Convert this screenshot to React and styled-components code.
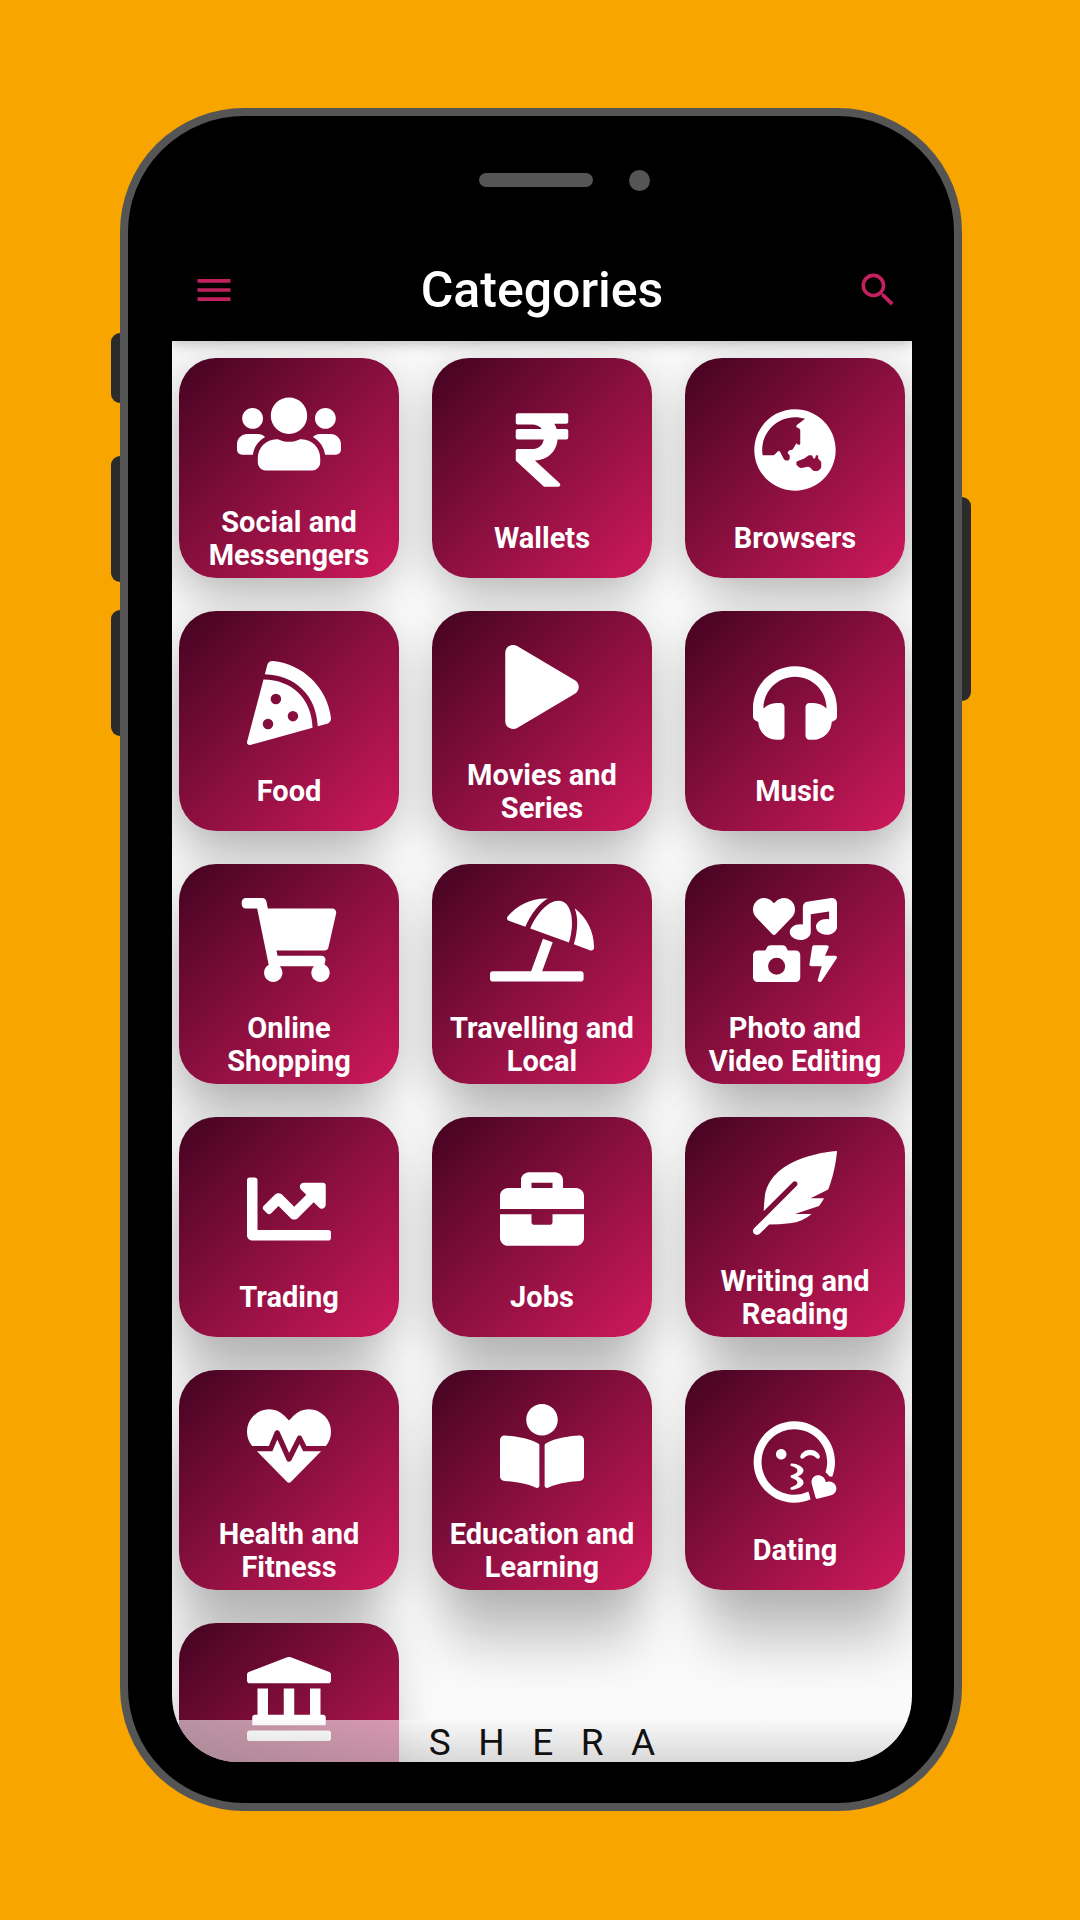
import React from "react";
import styled, { createGlobalStyle } from "styled-components";
import {
  FaUsers,
  FaRupeeSign,
  FaGlobeAsia,
  FaPizzaSlice,
  FaPlay,
  FaHeadphones,
  FaShoppingCart,
  FaUmbrellaBeach,
  FaIcons,
  FaChartLine,
  FaBriefcase,
  FaFeatherAlt,
  FaHeartbeat,
  FaBookReader,
  FaRegKissWinkHeart,
  FaLandmark,
} from "react-icons/fa";
import { MdMenu, MdSearch } from "react-icons/md";

const GlobalStyle = createGlobalStyle`
  *, *::before, *::after { box-sizing: border-box; }
  body {
    margin: 0;
    background: #f8a500;
    font-family: Roboto, "Liberation Sans", sans-serif;
  }
`;

const Stage = styled.div`
  display: flex;
  height: 100vh;
  padding: 108px 118px 109px 120px;
`;

const Phone = styled.div`
  position: relative;
  flex: 1;
  min-width: 0;
  display: flex;
  flex-direction: column;
  padding: 0 42px 41px 44px;
  background: #000;
  border: 8px solid #555;
  border-radius: 124px;
`;

const SideButton = styled.span`
  position: absolute;
  top: ${(p) => p.$top}px;
  ${(p) => p.$side}: -17px;
  width: 9px;
  height: ${(p) => p.$length}px;
  background: #2b2b2b;
  border-radius: ${(p) => (p.$side === "left" ? "9px 0 0 9px" : "0 9px 9px 0")};
`;

const Sensors = styled.div`
  display: flex;
  align-items: center;
  justify-content: center;
  gap: 36px;
  height: 124px;
  padding: 4px 0 0 44px;
`;

const Speaker = styled.span`
  width: 114px;
  height: 14px;
  border-radius: 7px;
  background: #555;
`;

const Camera = styled.span`
  width: 21px;
  height: 21px;
  border-radius: 50%;
  background: #555;
`;

const Screen = styled.div`
  position: relative;
  flex: 1;
  min-height: 0;
  display: flex;
  flex-direction: column;
  overflow: hidden;
  border-radius: 0 0 66px 66px;
  background: #fafafa;
`;

const AppBar = styled.header`
  position: relative;
  display: grid;
  grid-template-columns: 1fr auto 1fr;
  align-items: center;
  flex: none;
  height: 101px;
  padding: 0 12px 2px;
  background: #000;
  box-shadow: 0 1px 14px rgba(0, 0, 0, 0.3);
`;

const Title = styled.h1`
  margin: 0;
  color: #fff;
  font-size: 50px;
  line-height: 56px;
  font-weight: 500;
`;

const IconButton = styled.button`
  display: flex;
  justify-self: ${(p) => p.$align};
  padding: 0;
  padding-left: ${(p) => (p.$align === "start" ? 8 : 0)}px;
  border: 0;
  background: none;
  color: #c2205f;
  font-size: 44px;
  cursor: pointer;
`;

const Grid = styled.main`
  flex: 1;
  min-height: 0;
  overflow: hidden;
  display: grid;
  grid-template-columns: repeat(3, 1fr);
  align-content: start;
  gap: 33px;
  padding: 17px 7px;
`;

const Card = styled.a`
  display: flex;
  flex-direction: column;
  align-items: center;
  justify-content: center;
  gap: 30px;
  aspect-ratio: 1;
  padding-top: 27px;
  border-radius: 37px;
  background: linear-gradient(135deg, #430320 0%, #8a0f3f 50%, #cf195c 100%);
  box-shadow:
    ${(p) => p.$shiftX}px ${(p) => p.$drop}px 54px -12px rgba(0, 0, 0, 0.22),
    0 6px 44px rgba(0, 0, 0, 0.13);
  color: #fff;
  text-decoration: none;

  svg {
    flex: none;
    width: 104px;
    height: 84px;
  }
`;

const Label = styled.span`
  min-height: ${(p) => p.$rows * 33}px;
  font-size: 29px;
  line-height: 33px;
  font-weight: 700;
  text-align: center;
  white-space: nowrap;
`;

const BrandBar = styled.footer`
  position: absolute;
  inset: auto 0 0 0;
  height: 42px;
  padding-top: 4px;
  text-align: center;
  white-space: pre;
  color: #111;
  font-size: 37px;
  line-height: 38px;
  background: linear-gradient(rgba(247, 247, 247, 0.58), rgba(200, 200, 200, 0.67));
`;

const categories = [
  { icon: FaUsers, lines: ["Social and", "Messengers"] },
  { icon: FaRupeeSign, lines: ["Wallets"] },
  { icon: FaGlobeAsia, lines: ["Browsers"] },
  { icon: FaPizzaSlice, lines: ["Food"] },
  { icon: FaPlay, lines: ["Movies and", "Series"] },
  { icon: FaHeadphones, lines: ["Music"] },
  { icon: FaShoppingCart, lines: ["Online", "Shopping"] },
  { icon: FaUmbrellaBeach, lines: ["Travelling and", "Local"] },
  { icon: FaIcons, lines: ["Photo and", "Video Editing"] },
  { icon: FaChartLine, lines: ["Trading"] },
  { icon: FaBriefcase, lines: ["Jobs"] },
  { icon: FaFeatherAlt, lines: ["Writing and", "Reading"] },
  { icon: FaHeartbeat, lines: ["Health and", "Fitness"] },
  { icon: FaBookReader, lines: ["Education and", "Learning"] },
  { icon: FaRegKissWinkHeart, lines: ["Dating"] },
  { icon: FaLandmark, lines: [], rows: 2 },
];

function CategoryCard({ icon: Icon, lines, rows = lines.length, index }) {
  const row = Math.floor(index / 3);
  const column = index % 3;
  return (
    <Card href="#" $drop={24 + row * 10} $shiftX={(column - 1) * 9}>
      <Icon aria-hidden="true" />
      <Label $rows={rows}>
        {lines.map((line, i) => (
          <React.Fragment key={line}>
            {i > 0 && <br />}
            {line}
          </React.Fragment>
        ))}
      </Label>
    </Card>
  );
}

export default function App() {
  return (
    <>
      <GlobalStyle />
      <Stage>
        <Phone>
          <SideButton $side="left" $top={217} $length={70} />
          <SideButton $side="left" $top={340} $length={126} />
          <SideButton $side="left" $top={494} $length={126} />
          <SideButton $side="right" $top={381} $length={204} />
          <Sensors>
            <Speaker />
            <Camera />
          </Sensors>
          <Screen>
            <AppBar>
              <IconButton $align="start" aria-label="Menu">
                <MdMenu />
              </IconButton>
              <Title>Categories</Title>
              <IconButton $align="end" aria-label="Search">
                <MdSearch />
              </IconButton>
            </AppBar>
            <Grid>
              {categories.map((category, index) => (
                <CategoryCard key={index} index={index} {...category} />
              ))}
            </Grid>
            <BrandBar>{"S   H   E   R   A"}</BrandBar>
          </Screen>
        </Phone>
      </Stage>
    </>
  );
}
